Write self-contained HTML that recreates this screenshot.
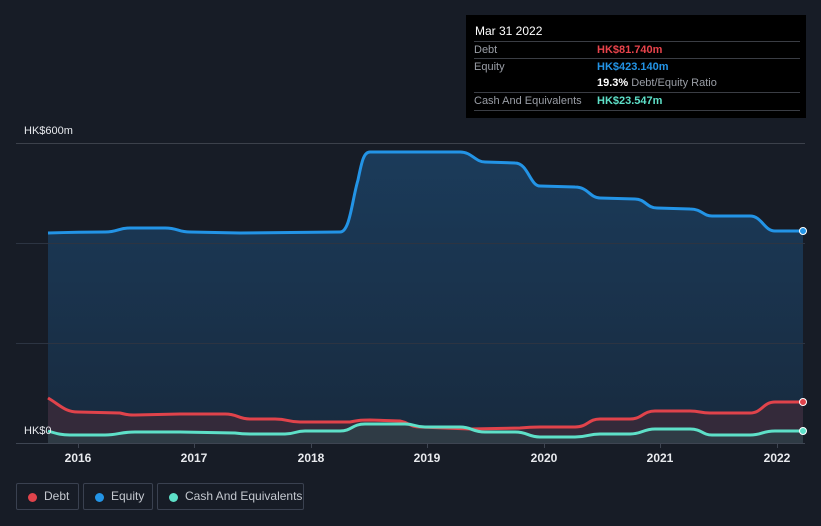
<!DOCTYPE html>
<html><head><meta charset="utf-8"><style>
html,body{margin:0;padding:0;width:821px;height:526px;background:#171c26;overflow:hidden;font-family:"Liberation Sans",sans-serif}
.tip{position:absolute;left:466px;top:15px;width:340px;height:103px;background:#000;}
.tip .t{position:absolute;left:9px;top:9px;color:#fff;font-size:12px}
.row{position:absolute;left:8px;width:326px;border-top:1px solid #3a3d44;height:17px;font-size:11px;color:#9a9ea6}
.row span{position:absolute;left:123px;top:2px;font-weight:bold}
.row i{font-style:normal;position:absolute;left:0;top:2px}
.leg{position:absolute;top:483px;height:27px;border:1px solid #3a4150;border-radius:2px;color:#c4c8cf;font-size:12px;line-height:27px;box-sizing:border-box}
.leg b{position:absolute;left:11px;top:9px;width:9px;height:9px;border-radius:50%}
.leg span{position:absolute;left:27px;top:-1px}
.yl{position:absolute;color:#e8eaee;font-size:11px}
.xl{position:absolute;top:451px;color:#e8eaee;font-size:12px;font-weight:bold;width:40px;text-align:center}
</style></head><body>
<svg width="821" height="526" style="position:absolute;left:0;top:0">
<defs>
<linearGradient id="ge" x1="0" y1="0" x2="0" y2="1"><stop offset="0" stop-color="#1b3b5a"/><stop offset="1" stop-color="#182a3e"/></linearGradient>
</defs>
<path d="M48,233 C80,232 90,232 105,232 C118,232 118,228 130,228 L165,228 C178,228 178,232 190,232 L240,233 L340,232 C350,232 352,200 358,180 C362,160 364,152 370,152 L460,152 C472,152 475,162 485,162 L515,163 C528,163 530,186 540,186 L575,187 C588,187 590,198 600,198 L635,199 C645,199 647,208 657,208 L690,209 C702,209 703,216 712,216 L750,216 C762,216 764,231 775,231 L803,231 L803,443 L48,443 Z" fill="url(#ge)"/>
<path d="M48,398 C60,405 65,412 78,412 L120,413 C128,415 130,415 135,415 L180,414 L225,414 C238,414 238,419 250,419 L275,419 C288,419 288,422 300,422 L350,422 C360,420 362,420 370,420 L400,421 C410,423 410,427 420,427 L470,429 L520,428 C530,427 530,427 540,427 L575,427 C588,427 588,419 600,419 L630,419 C642,419 643,411 655,411 L690,411 C700,411 700,413 710,413 L750,413 C762,413 763,402 775,402 L803,402 L803,443 L48,443 Z" fill="#3a2a3a" opacity="0.85"/>
<path d="M48,431 C58,434 62,435 70,435 L105,435 C118,435 120,432 135,432 L180,432 L235,433 C242,434 245,434 250,434 L285,434 C295,434 295,431 305,431 L340,431 C352,431 352,424 365,424 L405,424 C415,424 415,427 425,427 L460,427 C472,427 472,432 485,432 L515,432 C528,432 528,437 540,437 L575,437 C588,437 588,434 600,434 L630,434 C642,434 643,429 655,429 L690,429 C702,429 702,435 712,435 L750,435 C762,435 762,431 775,431 L803,431 L803,443 L48,443 Z" fill="#2e4048" opacity="0.8"/>
<line x1="16" y1="143.5" x2="805" y2="143.5" stroke="#3c414b"/>
<g stroke="#2c3442" stroke-width="1"><line x1="16" y1="243.5" x2="805" y2="243.5"/><line x1="16" y1="343.5" x2="805" y2="343.5"/></g>
<line x1="16" y1="443.5" x2="805" y2="443.5" stroke="#3e4552"/>
<g stroke="#3e4552"><line x1="78.5" y1="443" x2="78.5" y2="448"/><line x1="194.5" y1="443" x2="194.5" y2="448"/><line x1="311.5" y1="443" x2="311.5" y2="448"/><line x1="427.5" y1="443" x2="427.5" y2="448"/><line x1="544.5" y1="443" x2="544.5" y2="448"/><line x1="660.5" y1="443" x2="660.5" y2="448"/><line x1="777.5" y1="443" x2="777.5" y2="448"/></g>
<path d="M48,233 C80,232 90,232 105,232 C118,232 118,228 130,228 L165,228 C178,228 178,232 190,232 L240,233 L340,232 C350,232 352,200 358,180 C362,160 364,152 370,152 L460,152 C472,152 475,162 485,162 L515,163 C528,163 530,186 540,186 L575,187 C588,187 590,198 600,198 L635,199 C645,199 647,208 657,208 L690,209 C702,209 703,216 712,216 L750,216 C762,216 764,231 775,231 L803,231" fill="none" stroke="#2394e6" stroke-width="3"/>
<path d="M48,398 C60,405 65,412 78,412 L120,413 C128,415 130,415 135,415 L180,414 L225,414 C238,414 238,419 250,419 L275,419 C288,419 288,422 300,422 L350,422 C360,420 362,420 370,420 L400,421 C410,423 410,427 420,427 L470,429 L520,428 C530,427 530,427 540,427 L575,427 C588,427 588,419 600,419 L630,419 C642,419 643,411 655,411 L690,411 C700,411 700,413 710,413 L750,413 C762,413 763,402 775,402 L803,402" fill="none" stroke="#e0434b" stroke-width="3"/>
<path d="M48,431 C58,434 62,435 70,435 L105,435 C118,435 120,432 135,432 L180,432 L235,433 C242,434 245,434 250,434 L285,434 C295,434 295,431 305,431 L340,431 C352,431 352,424 365,424 L405,424 C415,424 415,427 425,427 L460,427 C472,427 472,432 485,432 L515,432 C528,432 528,437 540,437 L575,437 C588,437 588,434 600,434 L630,434 C642,434 643,429 655,429 L690,429 C702,429 702,435 712,435 L750,435 C762,435 762,431 775,431 L803,431" fill="none" stroke="#5ee0c8" stroke-width="3"/>
<circle cx="803" cy="231" r="3.5" fill="#2394e6" stroke="#fff" stroke-width="1"/>
<circle cx="803" cy="402" r="3.5" fill="#e0434b" stroke="#fff" stroke-width="1"/>
<circle cx="803" cy="431" r="3.5" fill="#5ee0c8" stroke="#fff" stroke-width="1"/>
</svg>
<div class="yl" style="left:24px;top:125px">HK$600m</div>
<div class="yl" style="left:24px;top:425px">HK$0</div>
<div class="xl" style="left:58px">2016</div>
<div class="xl" style="left:174px">2017</div>
<div class="xl" style="left:291px">2018</div>
<div class="xl" style="left:407px">2019</div>
<div class="xl" style="left:524px">2020</div>
<div class="xl" style="left:640px">2021</div>
<div class="xl" style="left:757px">2022</div>
<div class="tip">
<div class="t">Mar 31 2022</div>
<div class="row" style="top:26px"><i>Debt</i><span style="color:#e8434b">HK$81.740m</span></div>
<div class="row" style="top:43px"><i>Equity</i><span style="color:#2394e6">HK$423.140m</span></div>
<div class="row" style="top:60px;border-top:none"><span style="color:#fff">19.3% <b style="font-weight:normal;color:#9a9ea6">Debt/Equity Ratio</b></span></div>
<div class="row" style="top:77px;border-bottom:1px solid #3a3d44"><i>Cash And Equivalents</i><span style="color:#5ee0c8">HK$23.547m</span></div>
</div>
<div class="leg" style="left:16px;width:63px"><b style="background:#e0434b"></b><span>Debt</span></div>
<div class="leg" style="left:83px;width:70px"><b style="background:#2394e6"></b><span>Equity</span></div>
<div class="leg" style="left:157px;width:147px"><b style="background:#5ee0c8"></b><span>Cash And Equivalents</span></div>
</body></html>
